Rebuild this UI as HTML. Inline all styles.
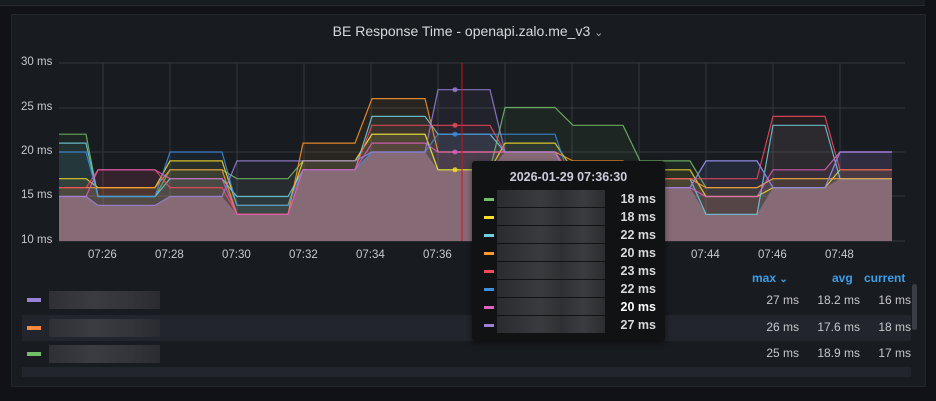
<!DOCTYPE html>
<html><head><meta charset="utf-8"><style>
html,body{margin:0;padding:0;width:936px;height:401px;background:#111217;overflow:hidden;font-family:"Liberation Sans",sans-serif;}
.top{position:absolute;left:0;top:-2px;width:925px;height:7px;background:#181b1f;border-bottom:1px solid #262930;}
.panel{position:absolute;left:11px;top:14px;width:913px;height:371px;background:#181b1f;border:1px solid #24272d;border-radius:2px;}
.title{position:absolute;left:0;top:23px;width:936px;text-align:center;color:#d8d9dc;font-size:14px;}
.ax{position:absolute;color:#c7c8cc;font-size:11.5px;}
.tt{position:absolute;left:472px;top:161px;width:193px;height:180px;background:#111214;border-radius:3px;box-shadow:0 2px 6px rgba(0,0,0,.5);}
.tt .h{position:absolute;top:9px;width:193px;text-align:center;color:#ccccdc;font-size:12.5px;font-weight:bold;}
.row{position:absolute;left:0;width:193px;height:18px;}
.sw{position:absolute;left:12px;top:8px;width:10px;height:3px;}
.blur{position:absolute;left:25px;top:0;width:108px;height:17px;background:linear-gradient(90deg,#2a2b2e,#3a3b3e 40%,#2f3033 60%,#3b3c3f 80%,#2c2d30);}
.v{position:absolute;right:9px;top:2px;color:#d8d9dc;font-size:12.5px;font-weight:bold;}
.lh{position:absolute;top:271px;color:#3d9fe8;font-size:12px;font-weight:bold;}
.lr{position:absolute;left:22px;width:889px;height:26px;}
.lr .s{position:absolute;left:5px;top:11px;width:14px;height:4px;}
.lr .b{position:absolute;left:27px;top:4px;width:111px;height:18px;background:linear-gradient(90deg,#2e3036,#3a3c42 40%,#33353a 70%,#2a2c31);}
.c{position:absolute;top:6px;color:#c7c8cc;font-size:12px;text-align:right;}
</style></head><body>
<div class="top"></div>
<div class="panel"></div>
<div class="title">BE Response Time - openapi.zalo.me_v3 <span style="font-size:11px;color:#aaa">&#8964;</span></div>
<svg id="g" style="position:absolute;left:0;top:0" width="936" height="401"></svg>
<div class="ax" style="left:21px;top:56px">30 ms</div>
<div class="ax" style="left:21px;top:101px">25 ms</div>
<div class="ax" style="left:21px;top:145px">20 ms</div>
<div class="ax" style="left:21px;top:189px">15 ms</div>
<div class="ax" style="left:21px;top:234px">10 ms</div>
<div class="ax" style="left:88px;top:249px">07:26</div>
<div class="ax" style="left:155px;top:249px">07:28</div>
<div class="ax" style="left:222px;top:249px">07:30</div>
<div class="ax" style="left:289px;top:249px">07:32</div>
<div class="ax" style="left:356px;top:249px">07:34</div>
<div class="ax" style="left:423px;top:249px">07:36</div>
<div class="ax" style="left:691px;top:249px">07:44</div>
<div class="ax" style="left:758px;top:249px">07:46</div>
<div class="ax" style="left:825px;top:249px">07:48</div>

<div class="lr" style="top:287px"><div class="s" style="background:#9a82d8"></div><div class="b"></div></div>
<div class="lr" style="top:315px;background:#22252b"><div class="s" style="background:#ff8a3d"></div><div class="b"></div></div>
<div class="lr" style="top:341px"><div class="s" style="background:#73bf69"></div><div class="b"></div></div>
<div class="lr" style="top:367px;height:10px;background:#22252b"></div>
<div class="lh" style="left:752px">max <span style="font-size:10px">&#8964;</span></div>
<div class="lh" style="left:832px">avg</div>
<div class="lh" style="left:864px">current</div>
<div class="c" style="left:740px;top:293px;width:59px">27 ms</div><div class="c" style="left:800px;top:293px;width:60px">18.2 ms</div><div class="c" style="left:860px;top:293px;width:51px">16 ms</div>
<div class="c" style="left:740px;top:320px;width:59px">26 ms</div><div class="c" style="left:800px;top:320px;width:60px">17.6 ms</div><div class="c" style="left:860px;top:320px;width:51px">18 ms</div>
<div class="c" style="left:740px;top:346px;width:59px">25 ms</div><div class="c" style="left:800px;top:346px;width:60px">18.9 ms</div><div class="c" style="left:860px;top:346px;width:51px">17 ms</div>
<div style="position:absolute;left:912px;top:284px;width:5px;height:46px;background:#3a3d44;border-radius:3px"></div>

<div class="tt"><div class="h">2026-01-29 07:36:30</div>
<div class="row" style="top:29px"><div class="sw" style="background:#73bf69"></div><div class="blur"></div><div class="v">18 ms</div></div>
<div class="row" style="top:47px"><div class="sw" style="background:#fade2a"></div><div class="blur"></div><div class="v">18 ms</div></div>
<div class="row" style="top:65px"><div class="sw" style="background:#6ed0e0"></div><div class="blur"></div><div class="v">22 ms</div></div>
<div class="row" style="top:83px"><div class="sw" style="background:#ff9830"></div><div class="blur"></div><div class="v">20 ms</div></div>
<div class="row" style="top:101px"><div class="sw" style="background:#f2495c"></div><div class="blur"></div><div class="v">23 ms</div></div>
<div class="row" style="top:119px"><div class="sw" style="background:#3d8fe0"></div><div class="blur"></div><div class="v">22 ms</div></div>
<div class="row" style="top:137px"><div class="sw" style="background:#e05fc0"></div><div class="blur"></div><div class="v" style="color:#fff">20 ms</div></div>
<div class="row" style="top:155px"><div class="sw" style="background:#9a82d8"></div><div class="blur"></div><div class="v">27 ms</div></div>
</div>
<script>
var X=[59,86,98,155,170,222,237,288,303,355,372,425,438,490,505,555,573,623,640,690,706,757,773,825,840,892];
var S={
"#73bf69":[22,22,15,15,18,18,17,17,19,19,22,22,18,18,25,25,23,23,19,19,16,16,17,17,17,17],
"#fade2a":[17,17,16,16,19,19,14,14,19,19,22,22,18,18,21,21,18,18,18,18,15,15,16,16,18,18],
"#6ed0e0":[21,21,15,15,17,17,15,15,18,18,24,24,22,22,20,20,17,17,17,17,13,13,23,23,17,17],
"#ff9830":[16,16,16,16,18,18,13,13,21,21,26,26,20,20,20,20,19,19,17,17,16,16,17,17,17,17],
"#f2495c":[16,16,18,18,16,16,13,13,18,18,23,23,23,23,20,20,17,17,17,17,17,17,24,24,18,18],
"#3d8fe0":[20,20,15,15,20,20,14,14,18,18,20,20,22,22,22,22,16,16,16,16,19,19,16,16,20,20],
"#e05fc0":[15,15,18,18,17,17,13,13,18,18,21,21,20,20,20,20,16,16,16,16,15,15,18,18,20,20],
"#9a82d8":[15,15,14,14,15,15,19,19,19,19,20,20,27,27,20,20,16,16,16,16,19,19,16,16,20,20]};
function y(v){return 241-(v-10)*8.9;}
var h='';
[63,108,152,196,241].forEach(function(a){h+='<line x1="59" x2="905" y1="'+a+'" y2="'+a+'" stroke="#34373d" stroke-width="1"/>';});
[103,170,237,304,371,438,505,572,639,706,773,840].forEach(function(a){h+='<line x1="'+a+'" x2="'+a+'" y1="63" y2="241" stroke="#34373d" stroke-width="1"/>';});
var mins=X.map(function(_,i){var m=99;for(var k in S)m=Math.min(m,S[k][i]);return m;});
var bp='59,241 '+X.map(function(x,i){return x+','+y(mins[i]);}).join(' ')+' 892,241';
h+='<polygon points="'+bp+'" fill="#6a5060"/>';
for(var c in S){var p=X.map(function(x,i){return x+','+y(S[c][i]);}).join(' ');
h+='<polygon points="59,241 '+p+' 892,241" fill="'+c+'" fill-opacity="0.07"/>';}
for(var c in S){var p=X.map(function(x,i){return x+','+y(S[c][i]);}).join(' ');
h+='<polyline points="'+p+'" fill="none" stroke="'+c+'" stroke-width="1.2" opacity="0.85"/>';}
h+='<line x1="462" x2="462" y1="63" y2="241" stroke="#d01020" stroke-width="1"/>';
[[27,"#9a82d8"],[23,"#f2495c"],[22,"#3d8fe0"],[20,"#e05fc0"],[18,"#fade2a"]].forEach(function(d){h+='<circle cx="455" cy="'+y(d[0])+'" r="2.5" fill="'+d[1]+'" opacity="0.8"/>';});
document.getElementById('g').innerHTML=h;
</script>
</body></html>
